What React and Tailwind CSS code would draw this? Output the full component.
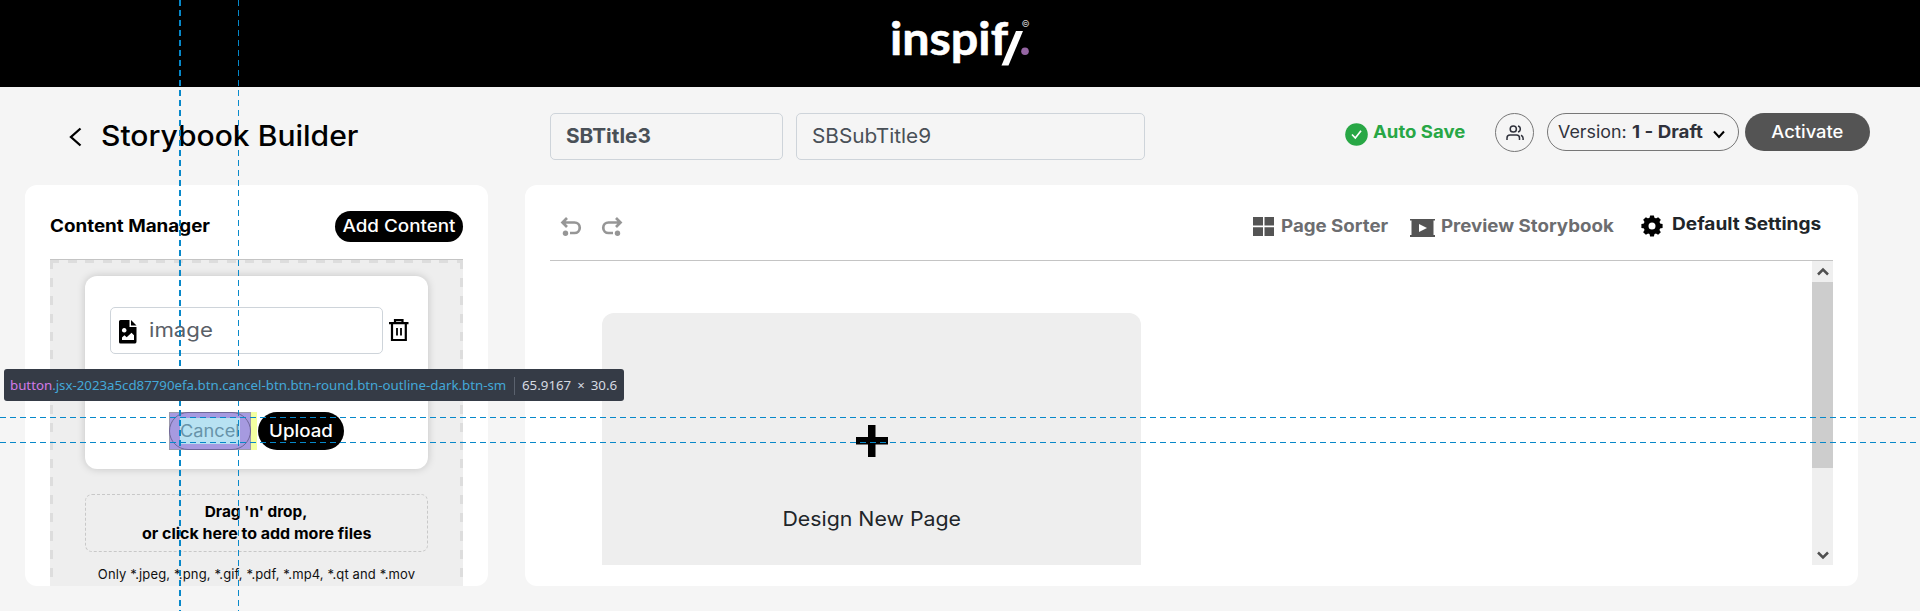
import React from "react";

function Logo() {
  return (
    <svg width="160" height="87" viewBox="880 0 160 87" className="block">
      <text x="890" y="54.500" textLength="118" lengthAdjust="spacingAndGlyphs" fill="#fff" stroke="#fff" strokeWidth="0.600" fontSize="45" fontWeight="700" fontFamily="Lato, sans-serif">inspif</text>
      <path d="M1016 31h7l-14.500 34.500h-7z" fill="#fff" />
      <circle cx="1025" cy="51.300" r="3.800" fill="#9565a3" />
      <text x="1025.500" y="26.500" textAnchor="middle" fill="#ccc" fontSize="9" fontFamily="Inter, sans-serif">©</text>
    </svg>
  );
}

function Undo({ className = "" }) {
  return (
    <svg width="22" height="20" viewBox="0 0 22 20" className={className} fill="none" stroke="#969696" strokeWidth="2.700">
      <path d="M7 1L2.500 5.500L7 10M3 5.500H14.500a5 5 0 0 1 0 10.500H10" />
      <circle cx="5.500" cy="16.300" r="2.700" fill="#969696" stroke="none" />
    </svg>
  );
}

function FileImage() {
  return (
    <svg width="18" height="24" viewBox="0 0 18 24" className="shrink-0">
      <path fillRule="evenodd" d="M1.500 0H10.500V7H17.500V21.500Q17.500 23.500 16 23.500H1.500Q0 23.500 0 22V1.500Q0 0 1.500 0ZM5.200 8a2.300 2.300 0 1 0 .01 0ZM3 20H15V15.200L12.500 12.800L7.700 17.200L5.400 15.200L3 17.500Z" />
      <path d="M12 0L17.500 5.500H12Z" />
    </svg>
  );
}

function Trash() {
  return (
    <svg width="20" height="23" viewBox="0 0 20 23" fill="none" stroke="#000" strokeWidth="2.200" className="shrink-0">
      <path d="M0 4.200H19.500M6 3.800V1.200H13.500V3.800M3 4.500V21H16.800V4.500" />
      <path d="M8 9V16.500M12 9V16.500" strokeWidth="1.800" />
    </svg>
  );
}

function Users() {
  return (
    <svg width="18" height="16" viewBox="0 0 18 16" fill="none" stroke="#30323c" strokeWidth="1.500">
      <circle cx="7.300" cy="4" r="3.100" />
      <path d="M1 15v-2q0-3 3-3h6.500q3 0 3 3v2M12 1a3.100 3.100 0 0 1 0 6M15 10.200q2.100.8 2.100 3v1.800" />
    </svg>
  );
}

function Gear() {
  return (
    <svg width="22" height="22" viewBox="-11 -11 22 22">
      <circle r="6" fill="none" stroke="#000" strokeWidth="5" />
      {[0, 45, 90, 135, 180, 225, 270, 315].map((a) => (
        <path key={a} d="M-2.600 -7.500L-1.900 -10.600H1.900L2.600 -7.500Z" transform={`rotate(${a})`} />
      ))}
    </svg>
  );
}

const V = "bg-[repeating-linear-gradient(to_bottom,#0788c9_0_6px,transparent_6px_10px)]";
const H = "bg-[repeating-linear-gradient(to_right,#0788c9_0_6px,transparent_6px_10px)]";

function InspectorOverlay() {
  return (
    <div className="pointer-events-none absolute inset-0 overflow-hidden">
      <div className={"absolute left-[179px] top-0 h-full w-[2px] " + V} />
      <div className={"absolute left-[238px] top-0 h-full w-px " + V} />
      <div className={"absolute left-0 top-[417px] h-px w-full " + H} />
      <div className={"absolute left-0 top-[442px] h-px w-full " + H} />
      <div className="absolute left-[4px] top-[369px] flex h-[32px] w-[620px] items-center whitespace-nowrap rounded-[3px] bg-[#353b46] pl-[6px] pt-px font-['Noto_Sans'] text-[13.3px]">
        <span className="w-[504px] tracking-[-0.020px] text-[#43a8d8]">
          <span className="text-[#d27ae8]">button</span>.jsx-2023a5cd87790efa.btn.cancel-btn.btn-round.btn-outline-dark.btn-sm
        </span>
        <span className="h-[18px] w-px bg-[#5b626e]" />
        <span className="pl-[7px] text-[#d5dae2] [word-spacing:2.500px]">65.9167 × 30.6</span>
      </div>
    </div>
  );
}

export default function App() {
  return (
    <div className="relative h-[611px] w-[1920px] overflow-hidden bg-[#f5f5f5] font-['Inter',sans-serif] text-[17px] leading-none text-black">
      <header className="flex h-[87px] justify-center bg-black">
        <Logo />
      </header>

      <div className="flex h-[98px] items-start pl-[69px] pt-[26px]">
        <div className="flex h-[47px] w-[481px] items-center">
          <svg width="13" height="20" viewBox="0 0 13 20" fill="none" stroke="#000" strokeWidth="2.300">
            <path d="M11.500 1.500L2 10L11.500 18.500" />
          </svg>
          <h1 className="-mt-px ml-[19px] origin-left scale-x-[1.073] whitespace-nowrap text-[28px] font-[450]">Storybook Builder</h1>
        </div>
        <div className="flex h-[47px] w-[233px] items-center rounded-[5px] border border-[#ced4da] pb-[2px] pl-[15px] text-[20px] font-bold text-[#495057]">
          <span className="origin-left scale-x-[1.040]">SBTitle3</span>
        </div>
        <div className="ml-[13px] flex h-[47px] w-[349px] items-center rounded-[5px] border border-[#ced4da] pb-[2px] pl-[15px] text-[20px] text-[#495057]">
          <span className="origin-left scale-x-[1.040]">SBSubTitle9</span>
        </div>
        <div className="ml-[200px] flex h-[40px] w-[150px] items-center whitespace-nowrap font-bold text-[#28a745]">
          <svg width="23" height="23" viewBox="0 0 23 23" className="mr-[5px] mt-[2px] shrink-0">
            <circle cx="11.500" cy="11.500" r="11.300" fill="#28a745" />
            <path d="M7 11.500L10.300 15L16 7.800" fill="none" stroke="#fff" strokeWidth="1.700" />
          </svg>
          <span className="-mt-[2px] origin-left scale-x-[1.092]">Auto Save</span>
        </div>
        <div className="flex h-[39px] w-[39px] items-center justify-center rounded-full border border-[#777]">
          <Users />
        </div>
        <div className="ml-[13px] flex h-[38px] w-[192px] items-center whitespace-nowrap rounded-full border border-[#777] pl-[10px] text-[#30323c]">
          <span className="w-[74px]"><span className="inline-block origin-left scale-x-[1.050]">Version:</span></span>
          <span className="w-[81px] font-bold"><span className="inline-block origin-left scale-x-[1.100]">1 - Draft</span></span>
          <svg width="12" height="9" viewBox="0 0 12 9" className="mt-[4px]" fill="none" stroke="#000" strokeWidth="2">
            <path d="M1 1.500L6 7L11 1.500" />
          </svg>
        </div>
        <div className="ml-[6px] flex h-[38px] w-[125px] items-center justify-center rounded-full bg-[#545454] font-medium text-white">
          <span className="scale-x-[1.080]">Activate</span>
        </div>
      </div>

      <main className="flex h-[401px] gap-[37px] pl-[25px]">
        <section className="flex w-[463px] flex-col overflow-hidden rounded-[12px] bg-white px-[25px]">
          <div className="flex h-[74px] shrink-0 items-center justify-between pt-[9px]">
            <h2 className="origin-left scale-x-[1.107] font-bold">Content Manager</h2>
            <div className="flex h-[31px] w-[128px] items-center justify-center whitespace-nowrap rounded-full bg-black font-medium text-white">
              <span className="scale-x-[1.107]">Add Content</span>
            </div>
          </div>
          <div className="relative flex h-[327px] flex-col items-center border-t border-[#c4c4c4] bg-[#eee] pt-[16px]">
            <div className="absolute left-0 top-0 h-[3px] w-full bg-[repeating-linear-gradient(to_right,#ddd_0_9px,#eee_9px_17.700px)]" />
            <div className="absolute left-0 top-0 h-full w-[3px] bg-[repeating-linear-gradient(to_bottom,#ddd_0_9px,#eee_9px_18.100px)]" />
            <div className="absolute right-0 top-0 h-full w-[3px] bg-[repeating-linear-gradient(to_bottom,#ddd_0_9px,#eee_9px_18.100px)]" />
            <div className="h-[193px] w-[343px] shrink-0 rounded-[12px] bg-white pl-[25px] pt-[31px] shadow-[0_0_8px_rgba(0,0,0,0.180)]">
              <div className="flex items-center">
                <div className="flex h-[47px] w-[273px] items-center rounded-[5px] border border-[#ced4da] pl-[8px] pt-[3px]">
                  <FileImage />
                  <span className="-mt-[4px] ml-[12px] origin-left scale-x-[1.110] text-[20px] text-[#5a6067]">image</span>
                </div>
                <div className="ml-[6px]"><Trash /></div>
              </div>
              <div className="ml-[59px] mt-[58px] flex h-[38px] w-[180px]">
                <div className="relative flex h-[38px] w-[82px] items-center justify-center bg-[#a69ae0] outline outline-1 -outline-offset-1 outline-[#9c9aac]">
                  <div className="absolute left-[11px] top-[6px] h-[26px] w-[60px] bg-[#b8e2f2]" />
                  <div className="absolute inset-0 rounded-[19px] border border-[#6f6799]" />
                  <span className="relative scale-x-[1.070] text-[#6793a9]">Cancel</span>
                </div>
                <div className="w-[6px] bg-[#f3ffa0]" />
                <div className="ml-px flex w-[86px] items-center justify-center rounded-full bg-black font-medium text-white">
                  <span className="scale-x-[1.100]">Upload</span>
                </div>
              </div>
            </div>
            <div className="mt-[25px] flex h-[58px] w-[343px] shrink-0 flex-col items-center justify-center rounded-[7px] border border-dashed border-[#c8c8c8] text-[15px] font-bold leading-[22px]">
              <span className="scale-x-[1.025]">Drag 'n' drop,</span>
              <span className="scale-x-[1.066]">or click here to add more files</span>
            </div>
            <div className="mt-[16px] whitespace-nowrap text-[13px] tracking-[0.140px] text-[#111]">Only *.jpeg, *.png, *.gif, *.pdf, *.mp4, *.qt and *.mov</div>
          </div>
        </section>

        <section className="w-[1333px] rounded-[12px] bg-white px-[25px]">
          <div className="flex h-[76px] items-center border-b border-[#c4c4c4] pt-[8px] font-bold text-[#6c6d70]">
            <Undo className="ml-[10px]" />
            <Undo className="ml-[19px] -scale-x-100" />
            <div className="ml-[630px] flex w-[157px] items-center whitespace-nowrap">
              <svg width="21" height="19" viewBox="0 0 21 19" className="mr-[7px]" fill="#545454">
                <path d="M0 0h10v8.500H0zM11.500 0h9.500v8.500h-9.500zM0 10.300h10V19H0zM11.500 10.300h9.500V19h-9.500z" />
              </svg>
              <span className="origin-left scale-x-[1.100]">Page Sorter</span>
            </div>
            <div className="flex w-[231px] items-center whitespace-nowrap">
              <svg width="25" height="18" viewBox="0 0 25 18" className="mr-[6px] mt-[2px]" fill="#545454">
                <path fillRule="evenodd" d="M0 0H25V1.500H23.500V16H25V18H0V16H1.500V1.500H0ZM9 5V13L17 9Z" />
              </svg>
              <span className="origin-left scale-x-[1.100]">Preview Storybook</span>
            </div>
            <div className="-mt-[4px] flex items-center whitespace-nowrap text-[#212529]">
              <span className="mr-[9px] mt-[2px]"><Gear /></span>
              <span className="origin-left scale-x-[1.122]">Default Settings</span>
            </div>
          </div>
          <div className="flex h-[304px] justify-between">
            <div className="ml-[52px] mt-[52px] flex w-[539px] flex-col items-center rounded-t-[12px] bg-[#eee] pt-[112px]">
              <svg width="32" height="32" viewBox="0 0 32 32"><path d="M12 0h7.500v12H32v7.500H19.500V32H12V19.500H0V12h12z" /></svg>
              <div className="mt-[52px] scale-x-[1.066] text-[20px] text-[#212529]">Design New Page</div>
            </div>
            <div className="flex w-[21px] flex-col items-center justify-between bg-[#efefef] pb-[5px]">
              <div className="flex h-[21px] shrink-0 items-center">
                <svg width="12" height="9" viewBox="0 0 12 9" fill="none" stroke="#505050" strokeWidth="2.500"><path d="M1 7.500L6 2.500L11 7.500" /></svg>
              </div>
              <div className="mb-auto h-[186px] w-full bg-[#cdcdcd]" />
              <svg width="12" height="9" viewBox="0 0 12 9" fill="none" stroke="#505050" strokeWidth="2.500"><path d="M1 1.500L6 6.500L11 1.500" /></svg>
            </div>
          </div>
        </section>
      </main>
      <InspectorOverlay />
    </div>
  );
}
